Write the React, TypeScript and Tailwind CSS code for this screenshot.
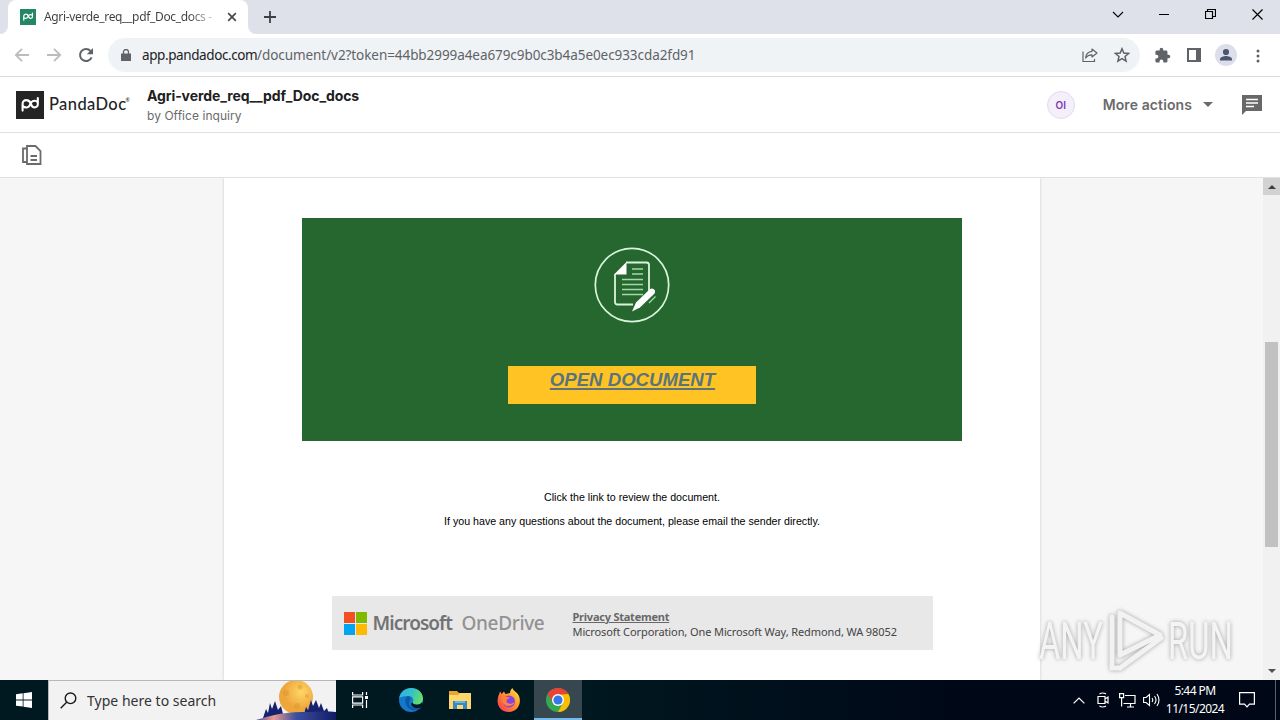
import type { ReactNode } from 'react'

// ─── Shared icons ─────────────────────────────────────────────────────────────

function PandaMark({ size, color }: { size: number; color: string }) {
  return (
    <svg width={size} height={size} viewBox="0 0 28 28" className="shrink-0">
      <rect width="28" height="28" fill={color} />
      <g fill="none" stroke="#fff" strokeWidth="2.1" strokeLinecap="round">
        <path d="M6.6 19.600V12.600a3.600 3.600 0 0 1 3.800-3.500c2.400 0 3.600 1.500 4.300 3.500.8 2.200 1.800 3.800 4 3.800a3 3 0 0 0 3.100-3V7" />
        <path d="M6.800 15c1 1.200 2.200 1.500 3.500 1.500 2.300 0 3.300-1.500 4.200-3.700.7-1.800 1.900-3.100 4-3.100 1.400 0 2.400.4 3.200 1.500" />
      </g>
    </svg>
  )
}

function Tri({ className, up }: { className: string; up?: boolean }) {
  return (
    <svg width="8" height="4" viewBox="0 0 8 4" className={className}>
      <path d={up ? 'M0 4L4 0l4 4z' : 'M0 0h8L4 4z'} fill="currentColor" />
    </svg>
  )
}

// ─── Browser chrome ───────────────────────────────────────────────────────────

function TabStrip() {
  return (
    <div className="flex h-[34px] bg-[#dee1e9]">
      <svg width="8" height="34" viewBox="0 0 8 34">
        <path d="M0 34a8 8 0 0 0 8-8v8z" fill="#fff" />
      </svg>
      <div className="flex w-[240px] items-center rounded-t-lg bg-white pl-3">
        <PandaMark size={16} color="#248567" />
        <div className="ml-2 w-[170px] whitespace-nowrap bg-linear-to-r from-[#3c4043] from-85% to-[#3c404330] bg-clip-text text-[12px] leading-[16px] text-transparent tracking-[-0.34px]">
          Agri-verde_req__pdf_Doc_docs -
        </div>
        <svg width="10" height="10" viewBox="0 0 10 10" className="ml-[13px] text-[#45494d]">
          <path d="M1.200 1.200l7.600 7.600M8.800 1.200L1.200 8.800" stroke="currentColor" strokeWidth="1.700" />
        </svg>
      </div>
      <svg width="8" height="34" viewBox="0 0 8 34">
        <path d="M8 34a8 8 0 0 1-8-8v8z" fill="#fff" />
      </svg>
      <svg width="12" height="34" viewBox="0 0 12 34" className="ml-2">
        <path d="M6 11v12M0 17h12" stroke="#3c4043" strokeWidth="1.800" />
      </svg>
      <div className="ml-auto flex items-center pr-[17px] text-black">
        <svg width="12" height="7" viewBox="0 0 12 7" className="mr-[35px] mt-[-6px]">
          <path d="M1 1l5 5 5-5" fill="none" stroke="currentColor" strokeWidth="1.100" />
        </svg>
        <svg width="10" height="1" viewBox="0 0 10 1" className="mr-[36px] mt-[-5px]">
          <path d="M0 .5h10" stroke="currentColor" />
        </svg>
        <svg width="11" height="11" viewBox="0 0 11 11" className="mr-[36px] mt-[-6px]">
          <path d="M.5 2.500h7v7h-7zM2.500 2.500v-2h8v7h-2.500" fill="none" stroke="currentColor" strokeWidth="1.200" />
        </svg>
        <svg width="11" height="11" viewBox="0 0 11 11" className="mt-[-6px]">
          <path d="M.5.5l10 10M10.500.5l-10 10" stroke="currentColor" strokeWidth="1.200" />
        </svg>
      </div>
    </div>
  )
}

function AddressBar() {
  return (
    <div className="flex h-[43px] items-center border-b border-[#d8dadd] bg-white pl-[14px] pr-[20px] text-[#5f6368]">
      <svg width="16" height="16" viewBox="0 0 16 16" className="text-[#babcbe]">
        <path d="M15 8H2M8 1.800L1.800 8 8 14.200" fill="none" stroke="currentColor" strokeWidth="1.800" />
      </svg>
      <svg width="16" height="16" viewBox="0 0 16 16" className="ml-4 text-[#babcbe]">
        <path d="M1 8h13M8 1.800L14.200 8 8 14.200" fill="none" stroke="currentColor" strokeWidth="1.800" />
      </svg>
      <svg width="16" height="16" viewBox="0 0 16 16" className="ml-4">
        <path d="M13.600 10.300A6 6 0 1 1 12.500 4" fill="none" stroke="currentColor" strokeWidth="2" />
        <path d="M15 1v6.200H8.800z" fill="currentColor" />
      </svg>
      <div className="ml-[14px] flex h-[34px] w-[1032px] items-center rounded-full bg-[#f0f3f6] pl-[13px] pr-[10px]">
        <svg width="10" height="12" viewBox="0 0 10 12">
          <path d="M0 4.500h10V12H0z" fill="currentColor" />
          <path d="M2.500 5V3a2.500 2.500 0 0 1 5 0v2" fill="none" stroke="currentColor" strokeWidth="1.300" />
        </svg>
        <div className="ml-[11px] flex whitespace-nowrap text-[13.500px] leading-5">
          <span className="w-[115px] text-[#202124] tracking-[-0.4px]">app.pandadoc.com</span>
          <span className="tracking-[-0.07px]">/document/v2?token=44bb2999a4ea679c9b0c3b4a5e0ec933cda2fd91</span>
        </div>
        <svg width="16" height="16" viewBox="0 0 16 16" className="ml-auto">
          <path d="M1 4.500v10h11.500v-2.500" fill="none" stroke="currentColor" strokeWidth="1.200" />
          <path d="M10 2l5 4-5 4V7.800C7 7.600 5 8.800 3.600 11 4 7.200 6 4.600 10 4.300z" fill="none" stroke="currentColor" strokeWidth="1.200" strokeLinejoin="round" />
        </svg>
        <svg width="16" height="16" viewBox="0 0 16 16" className="ml-4">
          <path d="M8 1.800l1.800 4.300 4.700.4-3.500 3 1.100 4.600L8 11.700l-4.100 2.400L5 9.500l-3.500-3 4.700-.4z" fill="none" stroke="currentColor" strokeWidth="1.500" />
        </svg>
      </div>
      <svg width="17" height="17" viewBox="0 0 24 24" className="ml-[14px]">
        <path fill="currentColor" d="M20.500 11H19V7a2 2 0 0 0-2-2h-4V3.500a2.500 2.500 0 0 0-5 0V5H4a2 2 0 0 0-2 2v3.800h1.500a2.700 2.700 0 0 1 0 5.400H2V20a2 2 0 0 0 2 2h3.800v-1.500a2.700 2.700 0 0 1 5.400 0V22H17a2 2 0 0 0 2-2v-4h1.500a2.500 2.500 0 0 0 0-5z" />
      </svg>
      <svg width="14" height="14" viewBox="0 0 14 14" className="ml-4">
        <path d="M0 0h14v14H0zM2 2v10h7V2z" fill="currentColor" fillRule="evenodd" />
      </svg>
      <svg width="22" height="22" viewBox="0 0 22 22" className="ml-[14px]">
        <circle cx="11" cy="11" r="11" fill="#dcdfe9" />
        <circle cx="11" cy="8" r="3.100" fill="#4b5670" />
        <path d="M5 16.500v-1.400c0-2 4-3.100 6-3.100s6 1.100 6 3.100v1.400z" fill="#4b5670" />
      </svg>
      <svg width="4" height="14" viewBox="0 0 4 14" className="ml-auto mt-px">
        <g fill="currentColor">
          <circle cx="2" cy="2" r="1.500" />
          <circle cx="2" cy="7" r="1.500" />
          <circle cx="2" cy="12" r="1.500" />
        </g>
      </svg>
    </div>
  )
}

// ─── PandaDoc header ──────────────────────────────────────────────────────────

function DocHeader() {
  return (
    <>
      <header className="flex h-14 items-center border-b border-[#dfe0e0] bg-white px-4 font-['Inter',sans-serif]">
        <PandaMark size={28} color="#242424" />
        <div className="mb-px ml-[5px] flex w-[98px] whitespace-nowrap font-['Lato',sans-serif] text-[16.500px] font-medium leading-5 text-[#242424] tracking-[0.4px]">
          PandaDoc<span className="ml-[-1px] text-[5px] leading-[12px] tracking-normal">®</span>
        </div>
        <div className="whitespace-nowrap pt-[3px]">
          <div className="text-[14px] font-bold leading-[18px] text-[#202020] tracking-[-0.1px]">Agri-verde_req__pdf_Doc_docs</div>
          <div className="mt-[2px] text-[12px] leading-[18px] text-[#6a6a6a] tracking-[0.05px]">by Office inquiry</div>
        </div>
        <div className="ml-auto flex size-7 items-center justify-center rounded-full border border-[#e4d9f1] bg-[#f5effb] pt-px text-[10px] font-semibold text-[#7a3cb4]">
          OI
        </div>
        <div className="ml-7 whitespace-nowrap text-[14px] font-semibold text-[#6b6b6b] tracking-[0.1px]">More actions</div>
        <svg width="10" height="5" viewBox="0 0 10 5" className="ml-[11px]">
          <path d="M0 0h10L5 5z" fill="#6b6b6b" />
        </svg>
        <svg width="20" height="20" viewBox="0 0 20 20" className="ml-[29px] mr-[2px]">
          <path d="M0 0h20v16H4l-4 4z" fill="#686868" />
          <path d="M4 4.500h12M4 8h12M4 11.500h8" stroke="#fff" strokeWidth="1.600" />
        </svg>
      </header>
      <div className="flex h-[45px] items-center border-b border-[#e0e1e1] bg-white pl-[22px]">
        <svg width="20" height="20" viewBox="0 0 20 20" fill="none" stroke="#6b6b6b" strokeWidth="1.800">
          <path d="M5 1h8.500L18.500 6v13H5zM4.500 3.500H1v13.500h3.500" />
          <path d="M8.500 11h6.500M8.500 15h6.500" />
        </svg>
      </div>
    </>
  )
}

// ─── Document page ────────────────────────────────────────────────────────────

function DocumentBadge() {
  return (
    <svg width="76" height="76" viewBox="0 0 76 76" className="mr-px mt-[29px]">
      <circle cx="38" cy="38" r="36.700" fill="none" stroke="#d9f3dc" strokeWidth="1.700" />
      <path d="M32 15.500h20.500a2.500 2.500 0 0 1 2.500 2.500v26M39 57.500H23.500a2.500 2.500 0 0 1-2.500-2.500V27" fill="none" stroke="#d9f3dc" strokeWidth="1.800" />
      <path d="M20 27.500L32.500 15v12.500z" fill="#fff" />
      <path d="M38 22h11M38 27h11M28 32.500h21M28 37.500h21M28 42.500h21M28 47.500h21" stroke="#a8d6ac" strokeWidth="1.400" />
      <path d="M38 64.500l4-9 14-13.500q3-1.500 5 1.500.5 2-1.500 4L46 60.500z" fill="#fff" />
      <path d="M55 56l6.500-6.500" stroke="#a8d6ac" strokeWidth="1.300" />
    </svg>
  )
}

function MicrosoftFooter() {
  return (
    <div className="mx-auto mt-[63px] flex h-[54px] w-[601px] items-center bg-[#e8e8e8] pl-3">
      <div className="grid grid-cols-2 gap-px">
        <i className="size-[11px] bg-[#f25022]" />
        <i className="size-[11px] bg-[#7fba00]" />
        <i className="size-[11px] bg-[#00a4ef]" />
        <i className="size-[11px] bg-[#ffb900]" />
      </div>
      <div className="ml-[6px] flex whitespace-nowrap text-[19px] leading-6">
        <span className="w-[89px] font-semibold text-[#737373] tracking-[-0.95px]">Microsoft</span>
        <span className="w-[111px] font-medium text-[#929292] tracking-[-0.35px]">OneDrive</span>
      </div>
      <div className="whitespace-nowrap pt-px text-[11px] leading-[15px] text-[#444]">
        <div className="font-bold text-[#686868] underline tracking-[-0.23px]">Privacy Statement</div>
        <div className="tracking-[-0.1px]">Microsoft Corporation, One Microsoft Way, Redmond, WA 98052</div>
      </div>
    </div>
  )
}

function Viewer() {
  return (
    <main className="relative flex h-[502px] overflow-hidden bg-[#f6f6f6]">
      <div className="ml-56 w-[816px] bg-white pt-10 font-['Liberation_Sans',sans-serif] shadow-[0_0_3px_rgba(0,0,0,0.18)]">
        <div className="mx-auto flex h-[223px] w-[660px] flex-col items-center bg-[#25672e]">
          <DocumentBadge />
          <div className="mt-[43px] h-[38px] w-[248px] bg-[#ffc423] pl-px text-center text-[18.600px] font-bold italic leading-[27px] text-[#59747c] underline decoration-[1.500px] underline-offset-2">
            OPEN DOCUMENT
          </div>
        </div>
        <div className="mt-11 text-center text-[10.670px] leading-6 text-black">
          <p>Click the link to review the document.</p>
          <p>If you have any questions about the document, please email the sender directly.</p>
        </div>
        <div className="font-['Noto_Sans',sans-serif]">
          <MicrosoftFooter />
        </div>
      </div>
      <div className="ml-auto flex w-[17px] flex-col items-center bg-[#f1f1f1] text-[#505050]">
        <div className="flex h-[17px] w-full items-center justify-center bg-[#d2d2d2]">
          <Tri up className="text-[#404040]" />
        </div>
        <div className="mt-[147px] h-[205px] w-[13px] bg-[#c1c1c1]" />
        <Tri className="mb-[7px] mt-auto" />
      </div>
      <Watermark />
    </main>
  )
}

function Watermark() {
  return (
    <svg width="204" height="72" viewBox="0 0 204 72" className="absolute bottom-0 right-[41px] overflow-visible drop-shadow-[0_0_2px_rgba(0,0,0,0.35)]">
      <g fill="#f4f4f4" fontFamily="Roboto, sans-serif" fontSize="52" fontWeight="400">
        <text transform="translate(4 51) scale(.63 1)">ANY</text>
        <text transform="translate(133 51) scale(.63 1)">RUN</text>
      </g>
      <g fill="none" stroke="#f2f2f2" strokeWidth="5" strokeLinejoin="round" strokeLinecap="round">
        <path d="M85 5v42l40-20z" />
        <path d="M77 9v51h8l41-30" />
      </g>
    </svg>
  )
}

// ─── Windows taskbar ──────────────────────────────────────────────────────────

function TaskButton({ active, children }: { active?: boolean; children: ReactNode }) {
  return (
    <div className={active ? 'ml-px flex w-12 items-center justify-center border-b-2 border-[#76b9ed] bg-[#36474f] pt-0.5' : 'flex w-[49px] items-center justify-center'}>
      {children}
    </div>
  )
}

function SearchArt() {
  return (
    <svg width="80" height="39" viewBox="0 0 80 39" className="ml-auto">
      <defs>
        <linearGradient id="hill" x1="0" x2="1">
          <stop offset="0" stopColor="#454f9c" />
          <stop offset=".22" stopColor="#e79a91" />
          <stop offset=".5" stopColor="#3c4f9f" />
          <stop offset="1" stopColor="#121c65" />
        </linearGradient>
        <radialGradient id="moon" cx=".65" cy=".35">
          <stop offset="0" stopColor="#ffd765" />
          <stop offset="1" stopColor="#eda63c" />
        </radialGradient>
      </defs>
      <path d="M7 37l3-9 2 4 2-10 2 6 3-8 3 9 3-4 3 12z" fill="#15236e" />
      <circle cx="40" cy="16" r="17" fill="url(#moon)" />
      <g fill="#d9952f" opacity=".45">
        <circle cx="30" cy="12" r="3" />
        <circle cx="44" cy="6" r="2.500" />
        <circle cx="41" cy="25" r="3" />
        <circle cx="51" cy="15" r="2" />
      </g>
      <path d="M47 36l3-10 2 3 3-10 2 6 3-6 3 8 2-5 3 8 3-3 3 9z" fill="#15236e" />
      <path d="M0 39c14-4 26-8 46-8 12 0 22-1 34 0v8z" fill="url(#hill)" />
    </svg>
  )
}

function Taskbar() {
  return (
    <footer className="flex h-10 bg-linear-to-r from-[#001820] from-45% to-[#000817] to-75%">
      <div className="flex w-12 items-center justify-center">
        <svg width="16" height="16" viewBox="0 0 16 16" fill="#fff">
          <path d="M0 2.300L6.700 1.300v6.200H0zM7.500 1.200L16 0v7.500H7.500zM0 8.400h6.700v6.200L0 13.700zM7.500 8.400H16V16l-8.500-1.200z" />
        </svg>
      </div>
      <div className="flex w-[288px] items-center border-l border-t border-[#b7b7b7] bg-[#f2f2f2] pl-[11px]">
        <svg width="17" height="17" viewBox="0 0 17 17" fill="none" stroke="#1a1a1a" strokeWidth="1.400">
          <circle cx="10.500" cy="6.300" r="5.300" />
          <path d="M6.600 10.200L.7 16.200" />
        </svg>
        <span className="ml-[10px] whitespace-nowrap text-[14px] text-[#333] tracking-[0.02px]">Type here to search</span>
        <SearchArt />
      </div>
      <TaskButton>
        <svg width="16" height="16" viewBox="0 0 16 16" fill="none" stroke="#fff" strokeWidth="1.200" className="mr-[2px]">
          <path d="M.6 0v3h10V0M.6 16v-3h10v3M.6 4.800h10v6.300H.600zM14.500 0v3M14.500 8v8" />
          <path d="M13 4h3v3h-3z" fill="#fff" stroke="none" />
        </svg>
      </TaskButton>
      <div className="flex pl-px">
        <TaskButton>
          <svg width="24" height="24" viewBox="0 0 24 24">
            <defs>
              <linearGradient id="edge" x1="0" x2="1" y1=".2" y2=".5">
                <stop offset="0" stopColor="#2bb3e8" />
                <stop offset=".5" stopColor="#35c2c4" />
                <stop offset="1" stopColor="#66df68" />
              </linearGradient>
            </defs>
            <circle cx="12" cy="12" r="12" fill="#1378cb" />
            <path d="M.2 10C1.500 3.500 6.500 0 12 0c7 0 12 4.800 12 10.500 0 4-3 6-6.500 6-3 0-4.500-1-4-2 2-3 0-6.500-4-6.500C5.500 8 1.500 9 .2 10z" fill="url(#edge)" />
            <path d="M9.500 8C5 9 5.500 17 10 20.500c3 2.400 7 2.200 11 .3 1-.5.8-1.200 0-1-7 2-12.500-2-10.500-6.500C11.500 11 11.500 9 9.500 8z" fill="#0c59a4" />
            <path d="M13.500 14.500c1.500 3 6.500 3 9.500 0l1.500 3-3.500 2.200c-5 1.500-9-1-9-4.200z" fill="#001820" />
          </svg>
        </TaskButton>
        <TaskButton>
          <svg width="22" height="20" viewBox="0 0 22 20">
            <path d="M0 1h8l2 2h12v16H0z" fill="#eaa52b" />
            <path d="M0 5h9l2-2h11v16H0z" fill="#ffd76c" />
            <path d="M4 19v-8h14v8h-4v-4H8v4z" fill="#368bc7" />
            <path d="M6 11h10v2H6z" fill="#66b6e4" />
          </svg>
        </TaskButton>
        <TaskButton>
          <svg width="24" height="24" viewBox="0 0 24 24">
            <defs>
              <linearGradient id="fox" x1="1" x2="0" y1="0" y2="1">
                <stop offset="0" stopColor="#fff24a" />
                <stop offset=".4" stopColor="#ff9a2b" />
                <stop offset="1" stopColor="#ff2d56" />
              </linearGradient>
            </defs>
            <path d="M13 5c0-2 1-4 2.500-5 .5 3 5 4 6.500 8 3 8-2 16-10 16S-1 17.500 1 9.500C1.500 7 2.500 5 3.200 3.500L4.500 6 7 3.500 8.500 6z" fill="url(#fox)" />
            <circle cx="12" cy="13.500" r="6" fill="#8643e4" />
            <path d="M5 9c3-2 5 1 8 0-1 2-3.500 2-3.500 4 0 3 5 4 8 1-1 5-11 6-12-1z" fill="#ff823b" />
          </svg>
        </TaskButton>
        <TaskButton active>
          <svg width="24" height="24" viewBox="0 0 24 24">
            <circle cx="12" cy="12" r="12" fill="#34a853" />
            <path d="M1.600 6A12 12 0 0 1 22.400 6L12 7.500 7 15z" fill="#ea4335" />
            <path d="M22.400 6A12 12 0 0 1 12 24l5-9-2-8.500z" fill="#fbbc04" />
            <circle cx="12" cy="12" r="6" fill="#fff" />
            <circle cx="12" cy="12" r="4.600" fill="#3578e5" />
          </svg>
        </TaskButton>
      </div>
      <div className="ml-auto flex items-center text-white">
        <svg width="12" height="7" viewBox="0 0 12 7" className="mr-[12px]">
          <path d="M.6 6.400L6 1l5.400 5.400" fill="none" stroke="currentColor" strokeWidth="1.200" />
        </svg>
        <svg width="12" height="16" viewBox="0 0 12 16" fill="none" stroke="currentColor" strokeWidth="1.200" className="mr-[10px]">
          <path d="M1 4.500h7v7H1zM8 7l3-2v6L8 9M2.500 2q3-2 6.500 0M2.500 14q3 2 6.500 0" />
        </svg>
        <svg width="17" height="15" viewBox="0 0 17 15" fill="none" stroke="currentColor" strokeWidth="1.200" className="mr-[7px]">
          <path d="M6 2.500h10v8H4.500M.6.600h4v4h-4zM2.600 5v8.500M8 14h7M11.500 10.500V14" />
        </svg>
        <svg width="18" height="14" viewBox="0 0 18 14" fill="none" stroke="currentColor" strokeWidth="1.100" className="mr-[4px]">
          <path d="M.6 4.500h2.500l3.400-3v11l-3.400-3H.600zM9 5q1.500 2 0 4M11.500 3q3 4 0 8M14 1q4 6 0 12" />
        </svg>
        <div className="w-[60px] whitespace-nowrap text-center text-[12px] leading-[18px] tracking-[-0.55px]">
          <div>5:44 PM</div>
          <div>11/15/2024</div>
        </div>
        <svg width="16" height="16" viewBox="0 0 16 16" className="ml-[14px]">
          <path d="M.6.600h14.800v11.500H10.500L8 14.800l-2.500-2.700H.600z" fill="none" stroke="currentColor" strokeWidth="1.200" />
        </svg>
        <div className="ml-5 mr-1 h-10 w-px bg-[#59616d]" />
      </div>
    </footer>
  )
}

export default function App() {
  return (
    <div className="flex h-[720px] w-[1280px] flex-col overflow-hidden bg-white font-['Noto_Sans','Open_Sans',sans-serif]">
      <TabStrip />
      <AddressBar />
      <DocHeader />
      <Viewer />
      <Taskbar />
    </div>
  )
}
